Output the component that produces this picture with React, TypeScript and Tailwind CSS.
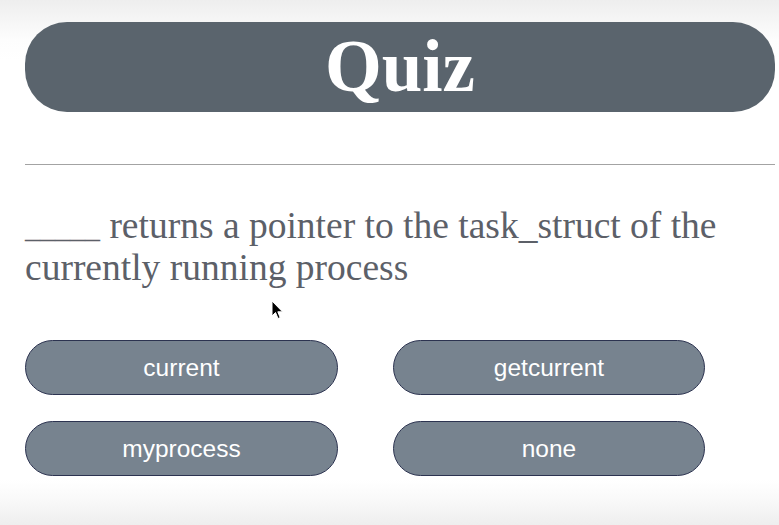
import React from "react";

const options = ["current", "getcurrent", "myprocess", "none"];

export default function App() {
  return (
    <div className="relative w-[779px] h-[525px] overflow-hidden bg-[linear-gradient(to_bottom,#eeeeee_0px,#fdfdfd_40px,#ffffff_60px,#ffffff_480px,#f9f9f9_500px,#eeeeee_525px)] pl-[25px] pr-[4px] pt-[22px]">
      <div className="h-[90px] rounded-[42px] bg-[#5a646d] flex items-center justify-center">
        <span className="text-white font-bold text-[73px] leading-[90px] font-['Liberation_Serif',serif]">
          Quiz
        </span>
      </div>

      <div className="mt-[52px] h-px bg-[#a3a3a3]" />

      <p className="mt-[40px] text-[37.5px] leading-[42px] text-[#5c6068] font-['Liberation_Serif',serif]">
        <span className="text-[30px] leading-none">_____</span> returns a pointer to the
        task_struct of the currently running process
      </p>

      <div className="mt-[51px] grid grid-cols-[313px_312px] gap-x-[55px] gap-y-[26px]">
        {options.map((o) => (
          <button
            key={o}
            className="h-[55px] rounded-full border border-[#2c3350] bg-[#77838f] text-white text-[24.5px] font-['Liberation_Sans',Arial,sans-serif] flex items-center justify-center pt-[1px]"
          >
            {o}
          </button>
        ))}
      </div>

      <svg
        className="absolute left-[271px] top-[300px]"
        width="14"
        height="21"
        viewBox="0 0 14 21"
      >
        <path
          d="M1 1 L1 16 L4.5 12.5 L7 18.5 L9.2 17.6 L6.8 11.8 L11.5 11.8 Z"
          fill="#000"
          stroke="#fff"
          strokeWidth="1"
          strokeLinejoin="round"
        />
      </svg>
    </div>
  );
}
